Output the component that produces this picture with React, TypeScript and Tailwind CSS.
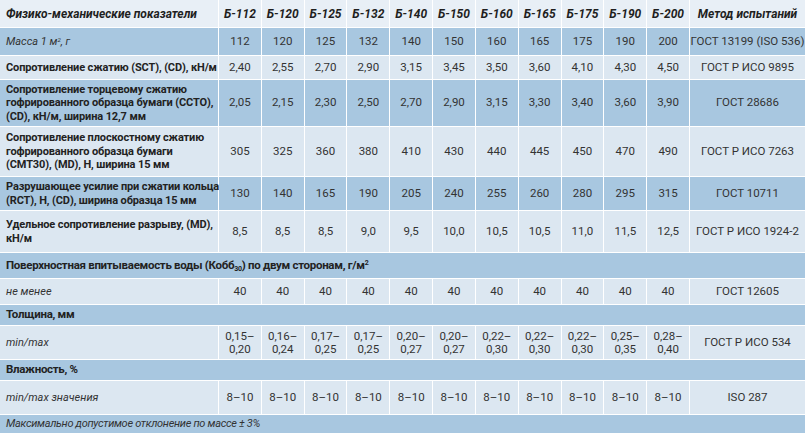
import React from "react";

const DARK = "bg-[#a8c7e0]";
const LIGHT = "bg-[#dce7f1]";
const COLS = "grid grid-cols-[218px_repeat(11,minmax(0,1fr))_115px] gap-px shrink-0";

type Row = {
  label: React.ReactNode;
  labelClass: string;
  values: React.ReactNode[];
  method: string;
  bg: string;
  h: string;
};

const grades = ["Б-112", "Б-120", "Б-125", "Б-132", "Б-140", "Б-150", "Б-160", "Б-165", "Б-175", "Б-190", "Б-200"];

const split = (s: string) => {
  const [a, b] = s.split("–");
  return (
    <span className="leading-[13px]">
      {a}–
      <br />
      {b}
    </span>
  );
};

const thick = ["0,15–0,20", "0,16–0,24", "0,17–0,25", "0,17–0,25", "0,20–0,27", "0,20–0,27", "0,22–0,30", "0,22–0,30", "0,22–0,30", "0,25–0,35", "0,28–0,40"];

const BOLD = "font-bold text-[11px] tracking-[-0.12px] text-[#222] whitespace-nowrap";
const ITAL = "italic text-[11px] text-[#333] whitespace-nowrap";

const rowsA: Row[] = [
  {
    label: (
      <>
        Масса 1 м<sup className="text-[6px]">2</sup>, г
      </>
    ),
    labelClass: ITAL,
    values: ["112", "120", "125", "132", "140", "150", "160", "165", "175", "190", "200"],
    method: "ГОСТ 13199 (ISO 536)",
    bg: DARK,
    h: "h-[27px]",
  },
  {
    label: "Сопротивление сжатию (SCT), (CD), кН/м",
    labelClass: BOLD,
    values: ["2,40", "2,55", "2,70", "2,90", "3,15", "3,45", "3,50", "3,60", "4,10", "4,30", "4,50"],
    method: "ГОСТ Р ИСО 9895",
    bg: LIGHT,
    h: "h-[23px]",
  },
  {
    label: (
      <>
        Сопротивление торцевому сжатию
        <br />
        гофрированного образца бумаги (CCTO),
        <br />
        (CD), кН/м, ширина 12,7 мм
      </>
    ),
    labelClass: BOLD,
    values: ["2,05", "2,15", "2,30", "2,50", "2,70", "2,90", "3,15", "3,30", "3,40", "3,60", "3,90"],
    method: "ГОСТ 28686",
    bg: DARK,
    h: "h-[46px]",
  },
  {
    label: (
      <>
        Сопротивление плоскостному сжатию
        <br />
        гофрированного образца бумаги
        <br />
        (CMT30), (MD), Н, ширина 15 мм
      </>
    ),
    labelClass: BOLD,
    values: ["305", "325", "360", "380", "410", "430", "440", "445", "450", "470", "490"],
    method: "ГОСТ Р ИСО 7263",
    bg: LIGHT,
    h: "h-[49px]",
  },
  {
    label: (
      <>
        Разрушающее усилие при сжатии кольца
        <br />
        (RCT), Н, (CD), ширина образца 15 мм
      </>
    ),
    labelClass: BOLD,
    values: ["130", "140", "165", "190", "205", "240", "255", "260", "280", "295", "315"],
    method: "ГОСТ 10711",
    bg: DARK,
    h: "h-[33px]",
  },
  {
    label: (
      <>
        Удельное сопротивление разрыву, (MD),
        <br />
        кН/м
      </>
    ),
    labelClass: BOLD,
    values: ["8,5", "8,5", "8,5", "9,0", "9,5", "10,0", "10,5", "10,5", "11,0", "11,5", "12,5"],
    method: "ГОСТ Р ИСО 1924-2",
    bg: LIGHT,
    h: "h-[41px]",
  },
];

function DataRow({ r }: { r: Row }) {
  return (
    <div className={`${COLS} ${r.h}`}>
      <div className={`${r.bg} flex items-center pl-[6px] leading-[13.5px] ${r.labelClass}`}>
        <div>{r.label}</div>
      </div>
      {r.values.map((v, i) => (
        <div key={i} className={`${r.bg} flex items-center justify-center text-center`}>
          {v}
        </div>
      ))}
      <div className={`${r.bg} flex items-center justify-center text-center whitespace-nowrap`}>{r.method}</div>
    </div>
  );
}

function Section({ children, h, cls }: { children: React.ReactNode; h: string; cls: string }) {
  return <div className={`${DARK} ${h} shrink-0 flex items-center pl-[6px] ${cls}`}>{children}</div>;
}

const SEC = "font-bold text-[11.5px] tracking-[-0.3px] text-[#222]";

export default function App() {
  return (
    <div
      className="w-[805px] h-[433px] overflow-hidden bg-white text-[11.5px] text-[#333] flex flex-col gap-px"
      style={{ fontFamily: "Roboto, 'Noto Sans', sans-serif" }}
    >
      <div className={`${COLS} h-[27px]`}>
        <div className="bg-[#e8eff6] flex items-center pl-[6px] font-bold italic text-[12px] text-[#1f1f1f] whitespace-nowrap">
          Физико-механические показатели
        </div>
        {grades.map((g) => (
          <div key={g} className="bg-[#e8eff6] flex items-center justify-center font-bold italic text-[12px] text-[#1f1f1f]">
            {g}
          </div>
        ))}
        <div className="bg-[#e8eff6] flex items-center justify-center font-bold italic text-[12px] text-[#1f1f1f] whitespace-nowrap">
          Метод испытаний
        </div>
      </div>
      {rowsA.map((r, i) => (
        <DataRow key={i} r={r} />
      ))}
      <Section h="h-[25px]" cls={SEC}>
        <span>
          Поверхностная впитываемость воды (Кобб<sub className="text-[7px]">30</sub>) по двум сторонам, г/м
          <sup className="text-[7px]">2</sup>
        </span>
      </Section>
      <DataRow
        r={{
          label: "не менее",
          labelClass: ITAL,
          values: Array(11).fill("40"),
          method: "ГОСТ 12605",
          bg: LIGHT,
          h: "h-[25px]",
        }}
      />
      <Section h="h-[20px]" cls={SEC}>
        Толщина, мм
      </Section>
      <DataRow
        r={{
          label: "min/max",
          labelClass: ITAL,
          values: thick.map((t) => split(t)),
          method: "ГОСТ Р ИСО 534",
          bg: LIGHT,
          h: "h-[33px]",
        }}
      />
      <Section h="h-[20px]" cls={SEC}>
        Влажность, %
      </Section>
      <DataRow
        r={{
          label: "min/max значения",
          labelClass: ITAL,
          values: Array(11).fill("8–10"),
          method: "ISO 287",
          bg: LIGHT,
          h: "h-[33px]",
        }}
      />
      <Section h="h-[18px]" cls="italic text-[11px] tracking-[-0.3px] text-[#333]">
        Максимально допустимое отклонение по массе ± 3%
      </Section>
    </div>
  );
}
